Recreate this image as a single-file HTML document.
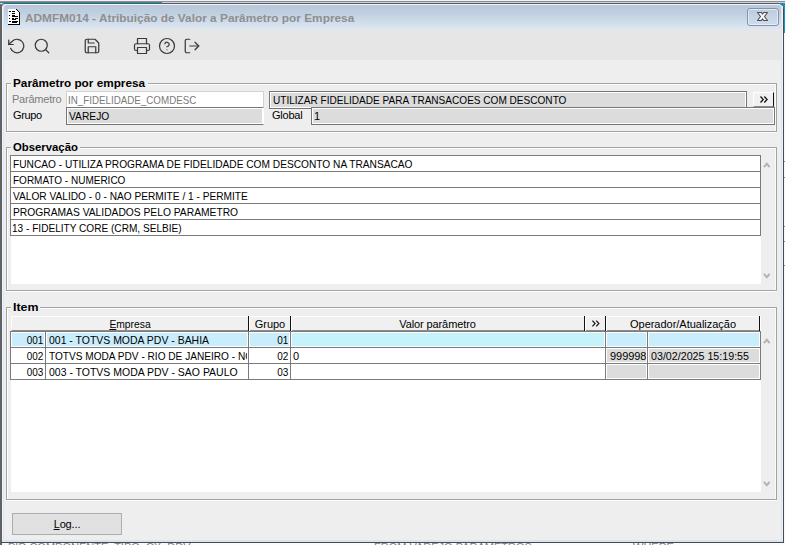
<!DOCTYPE html>
<html lang="pt-BR">
<head>
<meta charset="utf-8">
<title>ADMFM014 - Atribuição de Valor a Parâmetro por Empresa</title>
<style>
*{box-sizing:border-box;margin:0;padding:0}
html,body{width:785px;height:545px;overflow:hidden;background:#fff}
body{position:relative;font-family:"Liberation Sans",sans-serif;font-size:11px;color:#000}
.a{position:absolute}
.t{position:absolute;white-space:nowrap;line-height:13px;height:13px}
.grp{position:absolute;border:1px solid #a3a3a3;box-shadow:inset 1px 1px 0 #fff,inset -1px 0 0 #fbfbfb,0 1px 0 #fff}
.leg{position:absolute;font-weight:bold;font-size:11px;background:#eeeeee;line-height:13px;height:13px;white-space:nowrap;padding:0 2px}
.inp{position:absolute;height:18px;border:1px solid #767676;box-shadow:inset 0 0 0 1px #fff;background:#dcdcdc}
.ln{position:absolute;background:#7b7b7b}
.hs{position:absolute;top:316px;width:2px;height:15px;border-left:1px solid #111;border-right:1px solid #fff}
.cell{position:absolute;height:15px;border:1px solid #fff}
.sb{position:absolute;stroke:#b2b2b2;stroke-width:1.900;fill:none}
u{text-decoration:underline;text-underline-offset:1px}
</style>
</head>
<body>
<div class="a" style="left:0px;top:0px;width:785px;height:1px;background:#f2f2f2;"></div>
<div class="a" style="left:0px;top:1px;width:785px;height:1px;background:#8e8e8e;"></div>
<div class="a" style="left:0px;top:2px;width:785px;height:1px;background:#c3d0e3;"></div>
<div class="a" style="left:0px;top:2px;width:162px;height:1px;background:#1e8fb4;"></div>
<div class="a" style="left:0px;top:3px;width:6px;height:6px;background:#cfdaea;"></div>
<div class="a" style="left:778px;top:3px;width:7px;height:30px;background:#0f97c8;"></div>
<div class="a" style="left:784px;top:33px;width:1px;height:510px;background:#f6f6f6;"></div>
<div class="a" style="left:784px;top:161px;width:1px;height:1px;background:#8a8a8a;"></div>
<div class="a" style="left:784px;top:177px;width:1px;height:1px;background:#8a8a8a;"></div>
<div class="a" style="left:784px;top:226px;width:1px;height:1px;background:#8a8a8a;"></div>
<div class="a" style="left:784px;top:241px;width:1px;height:1px;background:#8a8a8a;"></div>
<div class="a" style="left:784px;top:265px;width:1px;height:1px;background:#8a8a8a;"></div>
<div class="a" style="left:0px;top:543px;width:785px;height:2px;background:#fbfbfb;"></div>
<div class="a" style="left:0px;top:543px;width:2px;height:2px;background:#666;"></div>
<div class="a" style="left:8px;top:543px;width:777px;height:2px;overflow:hidden;color:#7b7b86;font-size:11px;line-height:11px;white-space:pre"><span style="position:absolute;left:0;top:-1px">PID COMPONENTE, TIPO, CX, DDV</span><span style="position:absolute;left:366px;top:-1px">FROM VAREJO PARAMETROS</span><span style="position:absolute;left:625px;top:-1px">WHERE</span></div>
<div class="a" id="frame" style="left:0;top:3px;width:784px;height:540px;background:#eeeeee;border:1px solid #4a4a4a;border-top-color:#5a5a5a;border-left:2px solid #626262;border-radius:5px 6px 0 0"></div>
<div class="a" id="glow" style="left:2px;top:4px;width:781px;height:538px;border:2px solid #d9e5f3;border-top:1px solid #eef4fb;border-radius:5px 5px 0 0;border-left-color:#dde8f5"></div>
<div class="a" style="left:2px;top:6px;width:1px;height:534px;background:#ecf3fb;"></div>
<div class="a" style="left:782px;top:6px;width:1px;height:534px;background:#ecf3fb;"></div>
<div class="a" id="tbar" style="left:4px;top:5px;width:777px;height:24px;background:linear-gradient(#b8c8d9 0%,#c1d0e0 35%,#cfdcea 70%,#dbe7f3 100%);border-radius:3px 3px 0 0"></div>
<div class="a" id="tool" style="left:4px;top:29px;width:777px;height:31px;background:#e6e6e6;"></div>
<div class="a" style="left:0px;top:4px;width:1px;height:8px;background:#636363;"></div>
<svg class="a" id="appico" style="left:8px;top:9px" width="12" height="16" viewBox="0 0 12 16" shape-rendering="crispEdges"><path d="M0 0H8L11 3V15H0Z" fill="#fff"/><path d="M0 15h1v1h-1zM1 15h1v1h-1zM2 15h1v1h-1zM3 15h1v1h-1zM4 15h1v1h-1zM5 15h1v1h-1zM6 15h1v1h-1zM7 15h1v1h-1zM8 0h1v1h-1zM8 15h1v1h-1zM9 1h1v1h-1zM9 15h1v1h-1zM10 2h1v1h-1zM10 15h1v1h-1zM11 3h1v1h-1zM11 4h1v1h-1zM11 5h1v1h-1zM11 6h1v1h-1zM11 7h1v1h-1zM11 8h1v1h-1zM11 9h1v1h-1zM11 10h1v1h-1zM11 11h1v1h-1zM11 12h1v1h-1zM11 13h1v1h-1zM11 14h1v1h-1zM11 15h1v1h-1zM1 2h2v1h-2zM4 2h3v1h-3zM4 4h3v1h-3zM1 6h1v1h-1zM4 6h3v1h-3zM4 7h6v1h-6zM1 9h1v1h-1zM4 9h2v1h-2zM7 9h3v1h-3zM4 10h4v1h-4zM1 12h2v1h-2zM4 12h6v1h-6zM4 13h5v1h-5z" fill="#000"/></svg>
<div class="t" id="title" style="left:25px;top:11px;font-weight:bold;font-size:11px;color:#8f8f8f;line-height:14px;height:14px"><span style="display:inline-block;transform:scaleX(1.0765);transform-origin:0 0">ADMFM014 - Atribuição de Valor a Parâmetro por Empresa</span></div>
<div class="a" id="close" style="left:747px;top:8px;width:32px;height:18px;border:1px solid #8391b2;border-radius:3px;background:linear-gradient(#bdcbde,#cfdcea);box-shadow:inset 0 0 0 1px rgba(236,243,251,.75)"></div>
<svg class="a" id="closex" style="left:756px;top:11px" width="13" height="11" viewBox="0 0 13 11"><path d="M1.500 1.500h3.900l1.100 1.600 1.100-1.600h3.900l-3 4 3 4h-3.900l-1.100-1.600-1.100 1.600h-3.900l3-4z" fill="#f6f6f6" stroke="#4f4f4f" stroke-width="1.100" stroke-linejoin="round"/></svg>
<svg class="a" id="ic1" style="left:8px;top:37px" viewBox="0 0 24 24" width="18" height="18" fill="none" stroke="#3a3a3a" stroke-width="1.650" stroke-linecap="round" stroke-linejoin="round"><polyline points="1 4 1 10 7 10"/><path d="M3.510 15a9 9 0 1 0 2.130-9.360L1 10"/></svg>
<svg class="a" id="ic2" style="left:33px;top:37px" viewBox="0 0 24 24" width="18" height="18" fill="none" stroke="#3a3a3a" stroke-width="1.650" stroke-linecap="round" stroke-linejoin="round"><circle cx="11" cy="11" r="8"/><line x1="21" y1="21" x2="16.650" y2="16.650"/></svg>
<svg class="a" id="ic3" style="left:83px;top:37px" viewBox="0 0 24 24" width="18" height="18" fill="none" stroke="#3a3a3a" stroke-width="1.650" stroke-linecap="round" stroke-linejoin="round"><path d="M19 21H5a2 2 0 0 1-2-2V5a2 2 0 0 1 2-2h11l5 5v11a2 2 0 0 1-2 2z"/><polyline points="17 21 17 13 7 13 7 21"/><polyline points="7 3 7 8 15 8"/></svg>
<svg class="a" id="ic4" style="left:133px;top:37px" viewBox="0 0 24 24" width="18" height="18" fill="none" stroke="#3a3a3a" stroke-width="1.650" stroke-linecap="round" stroke-linejoin="round"><polyline points="6 9 6 2 18 2 18 9"/><path d="M6 18H4a2 2 0 0 1-2-2v-5a2 2 0 0 1 2-2h16a2 2 0 0 1 2 2v5a2 2 0 0 1-2 2h-2"/><rect x="6" y="14" width="12" height="8"/></svg>
<svg class="a" id="ic5" style="left:158px;top:37px" viewBox="0 0 24 24" width="18" height="18" fill="none" stroke="#3a3a3a" stroke-width="1.650" stroke-linecap="round" stroke-linejoin="round"><circle cx="12" cy="12" r="10"/><path d="M9.090 9a3 3 0 0 1 5.830 1c0 2-3 3-3 3"/><line x1="12" y1="17" x2="12.010" y2="17"/></svg>
<svg class="a" id="ic6" style="left:183px;top:37px" viewBox="0 0 24 24" width="18" height="18" fill="none" stroke="#3a3a3a" stroke-width="1.650" stroke-linecap="round" stroke-linejoin="round"><path d="M9 21H5a2 2 0 0 1-2-2V5a2 2 0 0 1 2-2h4"/><polyline points="16 17 21 12 16 7"/><line x1="21" y1="12" x2="9" y2="12"/></svg>
<div class="grp" id="g1" style="left:6px;top:83px;width:771px;height:49px"></div>
<div class="leg" id="l1" style="left:11px;top:77px;width:137px;"><span style="display:inline-block;transform:scaleX(1.0690);transform-origin:0 0">Parâmetro por empresa</span></div>
<div class="t" id="lbp" style="left:12px;top:93px;letter-spacing:-0.225px;color:#7c7c7c">Parâmetro</div>
<div class="inp" id="i1" style="left:66px;top:91px;width:198px;background:#fff;border-color:#d2d2d2;box-shadow:none"></div>
<div class="inp" id="i2" style="left:269px;top:91px;width:478px"></div>
<div class="inp" id="i3" style="left:66px;top:107px;width:198px;border-right-color:#fff"></div>
<div class="inp" id="i4" style="left:311px;top:107px;width:464px"></div>
<div class="t" id="t1" style="left:68px;top:94px;color:#7a7a7a"><span style="display:inline-block;transform:scaleX(0.8895);transform-origin:0 0">IN_FIDELIDADE_COMDESC</span></div>
<div class="t" id="t2" style="left:272.5px;top:94px;"><span style="display:inline-block;transform:scaleX(0.9144);transform-origin:0 0">UTILIZAR FIDELIDADE PARA TRANSACOES COM DESCONTO</span></div>
<div class="t" id="lbg" style="left:13px;top:109px;letter-spacing:-0.375px;">Grupo</div>
<div class="t" id="t3" style="left:69px;top:110px;"><span style="display:inline-block;transform:scaleX(0.9326);transform-origin:0 0">VAREJO</span></div>
<div class="t" id="lbgl" style="left:272px;top:109px;letter-spacing:-0.220px;">Global</div>
<div class="t" id="t4" style="left:314px;top:110px;">1</div>
<div class="a" id="bt1" style="left:753px;top:92px;width:21px;height:15px;background:#f1f1f1;border-top:1px solid #fff;border-left:1px solid #fff;border-right:1px solid #111;border-bottom:1px solid #8d8d8d"></div>
<svg class="a" id="bt1g" style="left:759px;top:95px" width="10" height="9" viewBox="0 0 10 9" fill="none" stroke="#111" stroke-width="1.250"><path d="M1.500 1.500l2.800 3-2.800 3M5.300 1.500l2.800 3-2.800 3"/></svg>
<div class="grp" id="g2" style="left:6px;top:147px;width:771px;height:144px"></div>
<div class="leg" id="l2" style="left:11px;top:141px;width:69px;"><span style="display:inline-block;transform:scaleX(1.0300);transform-origin:0 0">Observação</span></div>
<div class="a" id="obs" style="left:11px;top:156px;width:750px;height:128px;background:#fff;"></div>
<div class="ln" style="left:10px;top:155px;width:751px;height:1px"></div>
<div class="ln" style="left:10px;top:171px;width:751px;height:1px"></div>
<div class="ln" style="left:10px;top:187px;width:751px;height:1px"></div>
<div class="ln" style="left:10px;top:203px;width:751px;height:1px"></div>
<div class="ln" style="left:10px;top:219px;width:751px;height:1px"></div>
<div class="ln" style="left:10px;top:235px;width:751px;height:1px"></div>
<div class="ln" style="left:10px;top:155px;width:1px;height:81px"></div>
<div class="ln" style="left:760px;top:155px;width:1px;height:81px"></div>
<div class="t" id="o0" style="left:12.5px;top:158px;"><span style="display:inline-block;transform:scaleX(0.9241);transform-origin:0 0">FUNCAO - UTILIZA PROGRAMA DE FIDELIDADE COM DESCONTO NA TRANSACAO</span></div>
<div class="t" id="o1" style="left:12.5px;top:174px;"><span style="display:inline-block;transform:scaleX(0.9090);transform-origin:0 0">FORMATO - NUMERICO</span></div>
<div class="t" id="o2" style="left:13px;top:190px;"><span style="display:inline-block;transform:scaleX(0.9227);transform-origin:0 0">VALOR VALIDO - 0 - NAO PERMITE / 1 - PERMITE</span></div>
<div class="t" id="o3" style="left:12.5px;top:206px;"><span style="display:inline-block;transform:scaleX(0.9338);transform-origin:0 0">PROGRAMAS VALIDADOS PELO PARAMETRO</span></div>
<div class="t" id="o4" style="left:12px;top:222px;"><span style="display:inline-block;transform:scaleX(0.9168);transform-origin:0 0">13 - FIDELITY CORE (CRM, SELBIE)</span></div>
<svg class="sb" style="left:762px;top:161px" width="10" height="8" viewBox="0 0 10 8"><path d="M1.900 6.100l2.900-3.300 2.900 3.300"/></svg>
<svg class="sb" style="left:762px;top:272px" width="10" height="8" viewBox="0 0 10 8"><path d="M1.900 1.900l2.900 3.300 2.900-3.300"/></svg>
<div class="grp" id="g3" style="left:6px;top:307px;width:771px;height:193px"></div>
<div class="leg" id="l3" style="left:11px;top:301px;width:29px;"><span style="display:inline-block;transform:scaleX(1.1270);transform-origin:0 0">Item</span></div>
<div class="a" id="grid" style="left:11px;top:316px;width:750px;height:176px;background:#fff;"></div>
<div class="a" id="hdr" style="left:11px;top:316px;width:749px;height:15px;background:#f0f0f0;border-top:1px solid #fff;border-left:1px solid #fff;border-bottom:1px solid #8c8c8c"></div>
<div class="hs" style="left:248px"></div>
<div class="hs" style="left:290px"></div>
<div class="hs" style="left:584px"></div>
<div class="hs" style="left:605px"></div>
<div class="hs" style="left:759px"></div>
<div class="t" id="h1" style="left:12px;top:318px;width:236px;text-align:center;"><span style="display:inline-block;transform:scaleX(0.9360);transform-origin:50% 0"><u>E</u>mpresa</span></div>
<div class="t" id="h2" style="left:250px;top:318px;width:40px;text-align:center;letter-spacing:-0.050px;">Grupo</div>
<div class="t" id="h3" style="left:291.5px;top:318px;width:292px;text-align:center;letter-spacing:-0.107px;">Valor parâmetro</div>
<div class="t" id="h5" style="left:607px;top:318px;width:152px;text-align:center;letter-spacing:-0.021px;">Operador/Atualização</div>
<svg class="a" id="hg" style="left:591px;top:319px" width="10" height="9" viewBox="0 0 10 9" fill="none" stroke="#111" stroke-width="1.150"><path d="M1.400 1.700l2.700 2.800-2.700 2.800M5.200 1.700l2.700 2.800-2.700 2.800"/></svg>
<div class="cell" style="left:11px;top:332px;width:34px;background:#c9edfc"></div>
<div class="t" id="r0c0" style="left:11px;top:334px;width:32px;text-align:right;"><span style="display:inline-block;transform:scaleX(0.9050);transform-origin:100% 0">001</span></div>
<div class="cell" style="left:46px;top:332px;width:202px;background:#c9edfc"></div>
<div class="t" id="r0c1" style="left:48.5px;top:334px;width:198.5px;overflow:hidden;"><span style="display:inline-block;transform:scaleX(0.9510);transform-origin:0 0">001 - TOTVS MODA PDV - BAHIA</span></div>
<div class="cell" style="left:249px;top:332px;width:41px;background:#c9edfc"></div>
<div class="t" id="r0c2" style="left:249px;top:334px;width:39px;text-align:right;"><span style="display:inline-block;transform:scaleX(0.9080);transform-origin:100% 0">01</span></div>
<div class="cell" style="left:291px;top:332px;width:314px;background:#c6f3fb"></div>
<div class="cell" style="left:606px;top:332px;width:41px;background:#c9edfc"></div>
<div class="cell" style="left:648px;top:332px;width:112px;background:#c9edfc"></div>
<div class="cell" style="left:11px;top:348px;width:34px;background:#fff"></div>
<div class="t" id="r1c0" style="left:11px;top:350px;width:32px;text-align:right;"><span style="display:inline-block;transform:scaleX(0.9050);transform-origin:100% 0">002</span></div>
<div class="cell" style="left:46px;top:348px;width:202px;background:#fff"></div>
<div class="t" id="r1c1" style="left:48.5px;top:350px;width:198.5px;overflow:hidden;"><span style="display:inline-block;transform:scaleX(0.9180);transform-origin:0 0">TOTVS MODA PDV - RIO DE JANEIRO - NORTE</span></div>
<div class="cell" style="left:249px;top:348px;width:41px;background:#fff"></div>
<div class="t" id="r1c2" style="left:249px;top:350px;width:39px;text-align:right;"><span style="display:inline-block;transform:scaleX(0.9080);transform-origin:100% 0">02</span></div>
<div class="cell" style="left:291px;top:348px;width:314px;background:#fff"></div>
<div class="t" id="r1c3" style="left:293px;top:350px;width:311px;overflow:hidden;">0</div>
<div class="cell" style="left:606px;top:348px;width:41px;background:#dcdcdc"></div>
<div class="t" id="r1c4" style="left:610px;top:350px;width:36px;overflow:hidden;letter-spacing:-0.050px;">999998</div>
<div class="cell" style="left:648px;top:348px;width:112px;background:#dcdcdc"></div>
<div class="t" id="r1c5" style="left:650.5px;top:350px;width:108.5px;overflow:hidden;"><span style="display:inline-block;transform:scaleX(0.9710);transform-origin:0 0">03/02/2025 15:19:55</span></div>
<div class="cell" style="left:11px;top:364px;width:34px;background:#fff"></div>
<div class="t" id="r2c0" style="left:11px;top:366px;width:32px;text-align:right;"><span style="display:inline-block;transform:scaleX(0.9050);transform-origin:100% 0">003</span></div>
<div class="cell" style="left:46px;top:364px;width:202px;background:#fff"></div>
<div class="t" id="r2c1" style="left:48.5px;top:366px;width:198.5px;overflow:hidden;"><span style="display:inline-block;transform:scaleX(0.9525);transform-origin:0 0">003 - TOTVS MODA PDV - SAO PAULO</span></div>
<div class="cell" style="left:249px;top:364px;width:41px;background:#fff"></div>
<div class="t" id="r2c2" style="left:249px;top:366px;width:39px;text-align:right;"><span style="display:inline-block;transform:scaleX(0.9080);transform-origin:100% 0">03</span></div>
<div class="cell" style="left:291px;top:364px;width:314px;background:#fff"></div>
<div class="cell" style="left:606px;top:364px;width:41px;background:#dcdcdc"></div>
<div class="cell" style="left:648px;top:364px;width:112px;background:#dcdcdc"></div>
<div class="ln" style="left:10px;top:331px;width:751px;height:1px"></div>
<div class="ln" style="left:10px;top:347px;width:751px;height:1px"></div>
<div class="ln" style="left:10px;top:363px;width:751px;height:1px"></div>
<div class="ln" style="left:10px;top:379px;width:751px;height:1px"></div>
<div class="ln" style="left:10px;top:331px;width:1px;height:49px"></div>
<div class="ln" style="left:45px;top:331px;width:1px;height:49px"></div>
<div class="ln" style="left:248px;top:331px;width:1px;height:49px"></div>
<div class="ln" style="left:290px;top:331px;width:1px;height:49px"></div>
<div class="ln" style="left:605px;top:331px;width:1px;height:49px"></div>
<div class="ln" style="left:647px;top:331px;width:1px;height:49px"></div>
<div class="ln" style="left:760px;top:331px;width:1px;height:49px"></div>
<svg class="sb" style="left:762px;top:337px" width="10" height="8" viewBox="0 0 10 8"><path d="M1.900 6.100l2.900-3.300 2.900 3.300"/></svg>
<svg class="sb" style="left:762px;top:480px" width="10" height="8" viewBox="0 0 10 8"><path d="M1.900 1.900l2.900 3.300 2.900-3.300"/></svg>
<div class="a" id="log" style="left:12px;top:513px;width:110px;height:22px;background:#e1e1e1;border:1px solid #adadad"></div>
<div class="t" id="logt" style="left:12px;top:518px;width:110px;text-align:center;letter-spacing:-0.140px;"><u>L</u>og...</div>
</body>
</html>
